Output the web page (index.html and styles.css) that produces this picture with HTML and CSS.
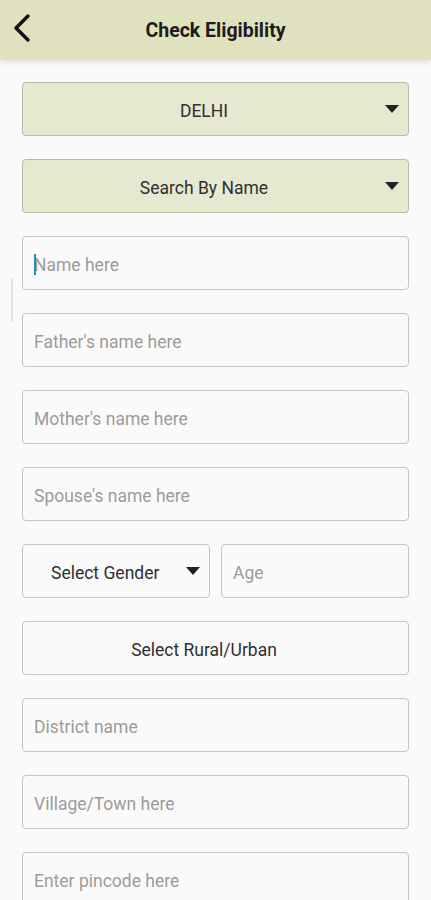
FILE: index.html
```html
<!DOCTYPE html>
<html>
<head>
<meta charset="utf-8">
<link rel="stylesheet" href="styles.css">
</head>
<body>
<header class="appbar">
  <svg class="back" width="20" height="30" viewBox="0 0 20 30"><path d="M16 3 L4 15 L16 27" fill="none" stroke="#111" stroke-width="3.4" stroke-linecap="round" stroke-linejoin="round"/></svg>
  <h1 class="title">Check Eligibility</h1>
</header>
<div class="scrollbar"></div>
<main class="form">
  <div class="field select filled"><span class="label">DELHI</span><span class="caret"></span></div>
  <div class="field select filled"><span class="label">Search By Name</span><span class="caret"></span></div>
  <div class="field input"><span class="cursor"></span><span class="ph">Name here</span></div>
  <div class="field input"><span class="ph">Father's name here</span></div>
  <div class="field input"><span class="ph">Mother's name here</span></div>
  <div class="field input"><span class="ph">Spouse's name here</span></div>
  <div class="row">
    <div class="field select gender"><span class="label">Select Gender</span><span class="caret"></span></div>
    <div class="field input"><span class="ph">Age</span></div>
  </div>
  <div class="field select plain"><span class="label">Select Rural/Urban</span></div>
  <div class="field input"><span class="ph">District name</span></div>
  <div class="field input"><span class="ph">Village/Town here</span></div>
  <div class="field input"><span class="ph">Enter pincode here</span></div>
</main>
</body>
</html>
```
FILE: styles.css
```css
* { box-sizing: border-box; }
html, body { margin: 0; padding: 0; }
body {
  background: #fafafa;
  font-family: Roboto, "Noto Sans", sans-serif;
  width: 431px;
  height: 900px;
  overflow: hidden;
  position: relative;
}
.appbar {
  height: 60px;
  background: #dfe1bf;
  display: flex;
  align-items: center;
  justify-content: center;
  position: relative;
  box-shadow: 0 2px 7px rgba(0,0,0,0.12);
  z-index: 1;
}
.back {
  position: absolute;
  left: 12px;
  top: 13px;
}
.title {
  margin: 0;
  font-size: 19.5px;
  font-weight: 700;
  color: #1c1c1c;
}
.scrollbar {
  position: absolute;
  left: 11px;
  top: 278px;
  width: 2px;
  height: 44px;
  background: #e4e4e4;
}
.form {
  padding: 22px 22px 0 22px;
  display: flex;
  flex-direction: column;
  gap: 23px;
}
.field {
  height: 54px;
  border: 1px solid #c4c4c0;
  border-radius: 4px;
  display: flex;
  align-items: center;
  position: relative;
  font-size: 17.5px;
  padding-top: 3px;
}
.select { justify-content: center; color: #303030; padding-right: 23px; }
.filled { background: #e6e8d0; border-color: #b9bba9; }
.plain { background: #fafafa; }
.caret {
  position: absolute;
  right: 9px;
  top: 50%;
  margin-top: -4px;
  width: 0;
  height: 0;
  border-left: 7.5px solid transparent;
  border-right: 7.5px solid transparent;
  border-top: 8px solid #222;
}
.input { padding-left: 11px; color: #9c9c9c; background: #fafafa; }
.cursor {
  position: absolute;
  left: 11px;
  top: 17px;
  width: 2px;
  height: 21px;
  background: #1e90c8;
}
.row {
  display: grid;
  grid-template-columns: minmax(0, 1fr) minmax(0, 1fr);
  gap: 11px;
}
.gender { justify-content: flex-start; padding-left: 28px; padding-right: 0; }
```
